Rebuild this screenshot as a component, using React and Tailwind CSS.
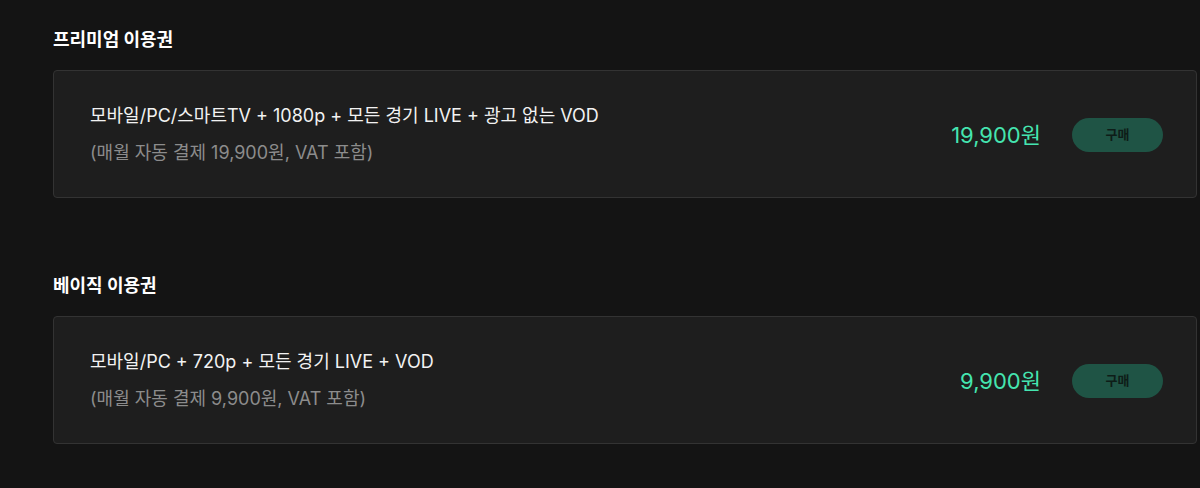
import React from "react";

const plans = [
  {
    title: "프리미엄 이용권",
    desc: "모바일/PC/스마트TV + 1080p + 모든 경기 LIVE + 광고 없는 VOD",
    note: "(매월 자동 결제 19,900원, VAT 포함)",
    price: "19,900원",
  },
  {
    title: "베이직 이용권",
    desc: "모바일/PC + 720p + 모든 경기 LIVE + VOD",
    note: "(매월 자동 결제 9,900원, VAT 포함)",
    price: "9,900원",
  },
];

function PlanSection({ plan }) {
  return (
    <section>
      <h2 className="text-[18px] leading-6 font-bold text-white">{plan.title}</h2>
      <div className="mt-[18px] flex items-center rounded-[4px] border border-[#333333] bg-[#1e1e1e] pl-9 pr-[33px] pt-[33px] pb-[32px]">
        <div className="flex-1 flex flex-col gap-[13px]">
          <p className="text-[18px] leading-6 text-[#f2f2f2]">{plan.desc}</p>
          <p className="text-[18px] leading-6 text-[#8c8c8c]">{plan.note}</p>
        </div>
        <span className="text-[22px] leading-7 text-[#45e5b0]">{plan.price}</span>
        <button className="ml-[31px] h-[34px] w-[91px] rounded-full bg-[#1f5445] text-[13px] font-bold text-[#0e1d18]">
          구매
        </button>
      </div>
    </section>
  );
}

export default function App() {
  return (
    <div
      className="min-h-[488px] w-[1200px] bg-[#141414] pl-[53px] pr-[3px] pt-7"
      style={{ fontFamily: "Inter, 'Noto Sans CJK KR', sans-serif" }}
    >
      <div className="flex flex-col gap-[76px]">
        {plans.map((p) => (
          <PlanSection key={p.title} plan={p} />
        ))}
      </div>
    </div>
  );
}
